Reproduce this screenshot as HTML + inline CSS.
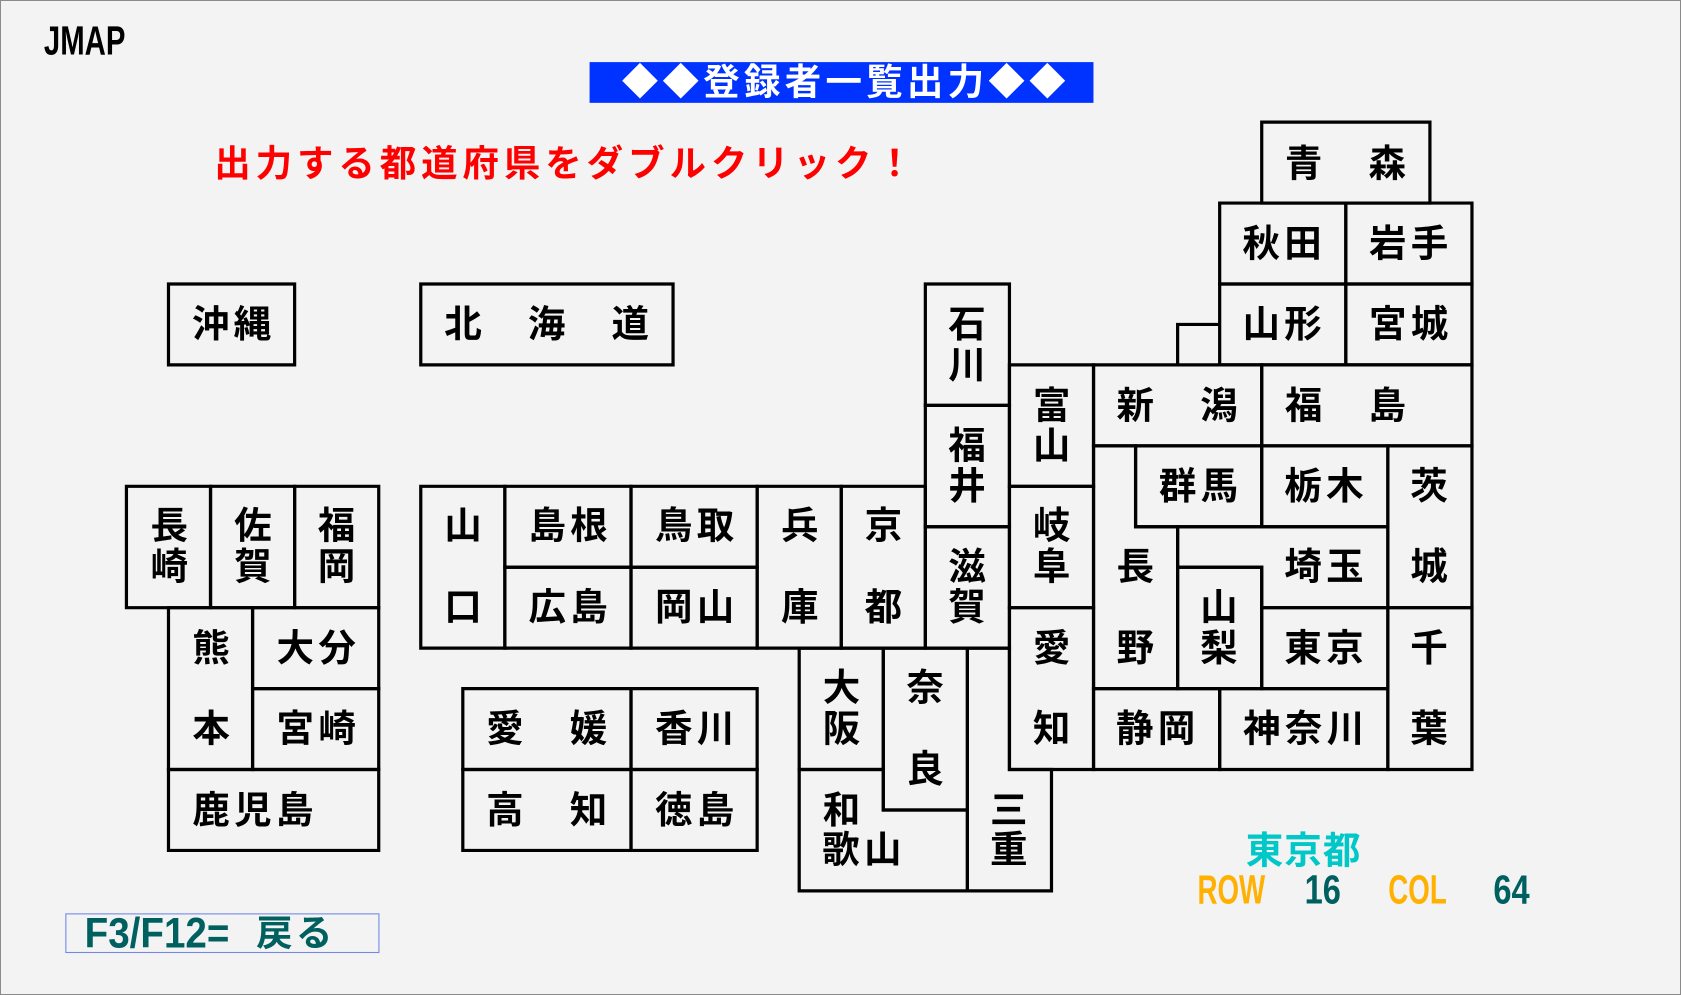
<!DOCTYPE html>
<html><head><meta charset="utf-8">
<style>
html,body{margin:0;padding:0;background:#f3f3f3;}
#wrap{position:relative;width:1681px;height:995px;overflow:hidden;background:#f3f3f3;box-sizing:border-box;border:1px solid #8a8a8a;}
#s{position:absolute;left:0;top:0;width:1568px;height:928px;transform:scale(1.0721);transform-origin:0 0;}
.c,.w{position:absolute;font-family:"Liberation Sans","Noto Sans CJK JP",sans-serif;font-weight:bold;font-size:35px;line-height:1;color:#000;transform:translate(-50%,-50%);white-space:nowrap;}
.w{letter-spacing:4px;text-indent:4px;}
.lat{position:absolute;font-family:"Liberation Sans",sans-serif;font-weight:bold;line-height:1;white-space:nowrap;transform-origin:0 50%;}
</style></head><body><div id="wrap"><div id="s">
<svg width="1568" height="928" style="position:absolute;left:0;top:0">
<g transform="translate(117,113) scale(39.22,37.74)" fill="none" stroke="#000" stroke-width="3" stroke-linejoin="miter">
<g>
<rect x="27" y="0" width="4" height="2" vector-effect="non-scaling-stroke"/>
<rect x="26" y="2" width="3" height="2" vector-effect="non-scaling-stroke"/>
<rect x="29" y="2" width="3" height="2" vector-effect="non-scaling-stroke"/>
<rect x="26" y="4" width="3" height="2" vector-effect="non-scaling-stroke"/>
<rect x="29" y="4" width="3" height="2" vector-effect="non-scaling-stroke"/>
<path d="M25 6 V5 H26" vector-effect="non-scaling-stroke"/>
<rect x="19" y="4" width="2" height="3" vector-effect="non-scaling-stroke"/>
<rect x="19" y="7" width="2" height="3" vector-effect="non-scaling-stroke"/>
<rect x="19" y="10" width="2" height="3" vector-effect="non-scaling-stroke"/>
<rect x="21" y="6" width="2" height="3" vector-effect="non-scaling-stroke"/>
<rect x="23" y="6" width="4" height="2" vector-effect="non-scaling-stroke"/>
<rect x="27" y="6" width="5" height="2" vector-effect="non-scaling-stroke"/>
<rect x="21" y="9" width="2" height="3" vector-effect="non-scaling-stroke"/>
<rect x="21" y="12" width="2" height="4" vector-effect="non-scaling-stroke"/>
<polygon points="23,8 24,8 24,10 25,10 25,14 23,14" vector-effect="non-scaling-stroke"/>
<rect x="24" y="8" width="3" height="2" vector-effect="non-scaling-stroke"/>
<rect x="27" y="8" width="3" height="2" vector-effect="non-scaling-stroke"/>
<rect x="30" y="8" width="2" height="4" vector-effect="non-scaling-stroke"/>
<polygon points="25,10 30,10 30,12 27,12 27,11 25,11" vector-effect="non-scaling-stroke"/>
<rect x="25" y="11" width="2" height="3" vector-effect="non-scaling-stroke"/>
<rect x="27" y="12" width="3" height="2" vector-effect="non-scaling-stroke"/>
<rect x="30" y="12" width="2" height="4" vector-effect="non-scaling-stroke"/>
<rect x="23" y="14" width="3" height="2" vector-effect="non-scaling-stroke"/>
<rect x="26" y="14" width="4" height="2" vector-effect="non-scaling-stroke"/>
<rect x="17" y="9" width="2" height="4" vector-effect="non-scaling-stroke"/>
<rect x="15" y="9" width="2" height="4" vector-effect="non-scaling-stroke"/>
<rect x="12" y="9" width="3" height="2" vector-effect="non-scaling-stroke"/>
<rect x="12" y="11" width="3" height="2" vector-effect="non-scaling-stroke"/>
<rect x="9" y="9" width="3" height="2" vector-effect="non-scaling-stroke"/>
<rect x="9" y="11" width="3" height="2" vector-effect="non-scaling-stroke"/>
<rect x="7" y="9" width="2" height="4" vector-effect="non-scaling-stroke"/>
<rect x="16" y="13" width="2" height="3" vector-effect="non-scaling-stroke"/>
<rect x="18" y="13" width="2" height="4" vector-effect="non-scaling-stroke"/>
<polygon points="20,13 21,13 21,16 22,16 22,19 20,19" vector-effect="non-scaling-stroke"/>
<polygon points="16,16 18,16 18,17 20,17 20,19 16,19" vector-effect="non-scaling-stroke"/>
<rect x="0" y="9" width="2" height="3" vector-effect="non-scaling-stroke"/>
<rect x="2" y="9" width="2" height="3" vector-effect="non-scaling-stroke"/>
<rect x="4" y="9" width="2" height="3" vector-effect="non-scaling-stroke"/>
<rect x="1" y="12" width="2" height="4" vector-effect="non-scaling-stroke"/>
<rect x="3" y="12" width="3" height="2" vector-effect="non-scaling-stroke"/>
<rect x="3" y="14" width="3" height="2" vector-effect="non-scaling-stroke"/>
<rect x="1" y="16" width="5" height="2" vector-effect="non-scaling-stroke"/>
<rect x="8" y="14" width="4" height="2" vector-effect="non-scaling-stroke"/>
<rect x="12" y="14" width="3" height="2" vector-effect="non-scaling-stroke"/>
<rect x="8" y="16" width="4" height="2" vector-effect="non-scaling-stroke"/>
<rect x="12" y="16" width="3" height="2" vector-effect="non-scaling-stroke"/>
<rect x="1" y="4" width="3" height="2" vector-effect="non-scaling-stroke"/>
<rect x="7" y="4" width="6" height="2" vector-effect="non-scaling-stroke"/>
</g></g></svg>

<div class="lat" style="left:40px;top:38px;font-size:38px;color:#000;transform:translateY(-50%) scaleX(0.72)">JMAP</div>
<div style="position:absolute;left:549px;top:57px;width:470px;height:38px;background:#0033ff;"></div>
<div class="c" style="left:786px;top:76px;color:#fff;font-size:34px;letter-spacing:4px;text-indent:4px">◆◆登録者一覧出力◆◆</div>
<div class="c" style="left:527px;top:152px;color:#ff0000;font-size:34px;letter-spacing:4.6px">出力する都道府県をダブルクリック！</div>

<div class="w" style="left:1254px;top:152px">青　森</div>
<div class="w" style="left:1195px;top:227px">秋田</div>
<div class="w" style="left:1313px;top:227px">岩手</div>
<div class="w" style="left:1195px;top:302px">山形</div>
<div class="w" style="left:1313px;top:302px">宮城</div>
<div class="w" style="left:215px;top:302px">沖縄</div>
<div class="w" style="left:509px;top:302px">北　海　道</div>
<div class="w" style="left:1097px;top:378px">新　潟</div>
<div class="w" style="left:1254px;top:378px">福　島</div>
<div class="w" style="left:1117px;top:453px">群馬</div>
<div class="w" style="left:1234px;top:453px">栃木</div>
<div class="w" style="left:1234px;top:528px">埼玉</div>
<div class="w" style="left:1234px;top:604px">東京</div>
<div class="w" style="left:1077px;top:679px">静岡</div>
<div class="w" style="left:1215px;top:679px">神奈川</div>
<div class="w" style="left:529px;top:490px">島根</div>
<div class="w" style="left:647px;top:490px">鳥取</div>
<div class="w" style="left:529px;top:566px">広島</div>
<div class="w" style="left:647px;top:566px">岡山</div>
<div class="w" style="left:509px;top:679px">愛　媛</div>
<div class="w" style="left:647px;top:679px">香川</div>
<div class="w" style="left:509px;top:755px">高　知</div>
<div class="w" style="left:647px;top:755px">徳島</div>
<div class="w" style="left:294px;top:604px">大分</div>
<div class="w" style="left:294px;top:679px">宮崎</div>
<div class="w" style="left:235px;top:755px">鹿児島</div>
<div class="w" style="left:803px;top:792px">歌山</div>

<div class="c" style="left:901px;top:302px">石</div><div class="c" style="left:901px;top:340px">川</div>
<div class="c" style="left:901px;top:415px">福</div><div class="c" style="left:901px;top:453px">井</div>
<div class="c" style="left:901px;top:528px">滋</div><div class="c" style="left:901px;top:566px">賀</div>
<div class="c" style="left:980px;top:378px">富</div><div class="c" style="left:980px;top:415px">山</div>
<div class="c" style="left:980px;top:490px">岐</div><div class="c" style="left:980px;top:528px">阜</div>
<div class="c" style="left:980px;top:604px">愛</div><div class="c" style="left:980px;top:679px">知</div>
<div class="c" style="left:1058px;top:528px">長</div><div class="c" style="left:1058px;top:604px">野</div>
<div class="c" style="left:1332px;top:453px">茨</div><div class="c" style="left:1332px;top:528px">城</div>
<div class="c" style="left:1332px;top:604px">千</div><div class="c" style="left:1332px;top:679px">葉</div>
<div class="c" style="left:1136px;top:566px">山</div><div class="c" style="left:1136px;top:604px">梨</div>
<div class="c" style="left:823px;top:490px">京</div><div class="c" style="left:823px;top:566px">都</div>
<div class="c" style="left:745px;top:490px">兵</div><div class="c" style="left:745px;top:566px">庫</div>
<div class="c" style="left:431px;top:490px">山</div><div class="c" style="left:431px;top:566px">口</div>
<div class="c" style="left:784px;top:641px">大</div><div class="c" style="left:784px;top:679px">阪</div>
<div class="c" style="left:862px;top:641px">奈</div><div class="c" style="left:862px;top:717px">良</div>
<div class="c" style="left:940px;top:755px">三</div><div class="c" style="left:940px;top:792px">重</div>
<div class="c" style="left:784px;top:755px">和</div>
<div class="c" style="left:157px;top:490px">長</div><div class="c" style="left:157px;top:528px">崎</div>
<div class="c" style="left:235px;top:490px">佐</div><div class="c" style="left:235px;top:528px">賀</div>
<div class="c" style="left:313px;top:490px">福</div><div class="c" style="left:313px;top:528px">岡</div>
<div class="c" style="left:196px;top:604px">熊</div><div class="c" style="left:196px;top:679px">本</div>

<div class="c" style="left:1215px;top:793px;color:#00c8c8;letter-spacing:1px">東京都</div>
<div class="lat" style="left:1116px;top:830px;font-size:38px;color:#ffb000;transform:translateY(-50%) scaleX(0.68)">ROW</div>
<div class="lat" style="left:1216px;top:830px;font-size:38px;color:#006060;transform:translateY(-50%) scaleX(0.8)">16</div>
<div class="lat" style="left:1294px;top:830px;font-size:38px;color:#ffb000;transform:translateY(-50%) scaleX(0.68)">COL</div>
<div class="lat" style="left:1392px;top:830px;font-size:38px;color:#006060;transform:translateY(-50%) scaleX(0.8)">64</div>

<div style="position:absolute;left:60px;top:851px;width:293px;height:37px;border:1px solid #7088e8;box-sizing:border-box;"></div>
<div class="lat" style="left:78px;top:870px;font-size:40px;color:#006060;transform:translateY(-50%) scaleX(0.9)">F3/F12=</div>
<div class="c" style="left:238px;top:870px;color:#006060;transform:translateY(-50%);letter-spacing:3px;font-size:34px">戻る</div>
</div></div></body></html>
